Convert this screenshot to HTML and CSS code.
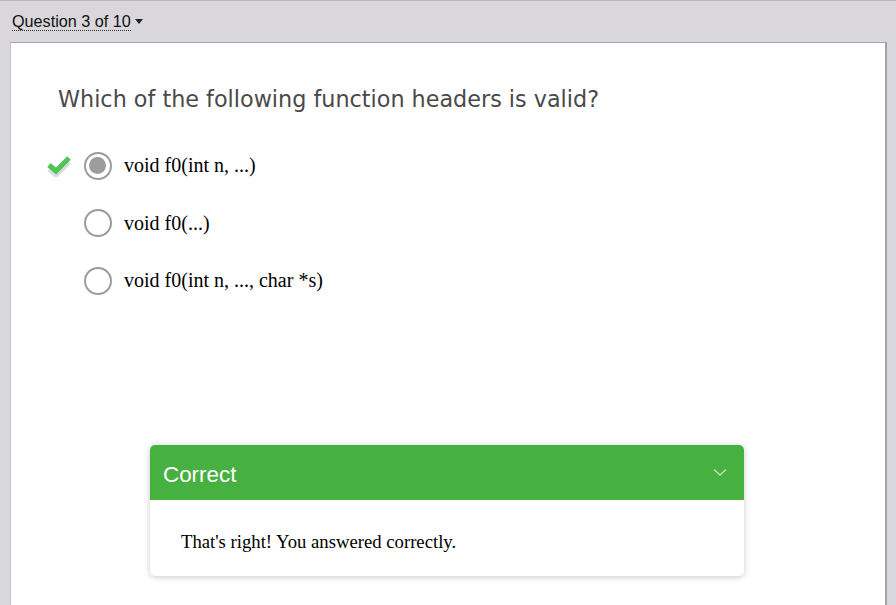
FILE: index.html
```html
<!DOCTYPE html>
<html>
<head>
<meta charset="utf-8">
<link rel="stylesheet" href="styles.css">
</head>
<body>
<div class="topbar">
  <span class="qnum">Question 3 of 10</span><span class="caret"></span>
</div>
<div class="card">
  <div class="question">Which of the following function headers is valid?</div>
  <div class="options">
    <div class="opt">
      <span class="mark">
        <svg width="26" height="22" viewBox="0 0 26 22">
          <polyline points="3,12 10,18 23,5" fill="none" stroke="#dcdcdc" stroke-width="5" stroke-linejoin="miter" transform="translate(0,2)"/>
          <polyline points="3,10 10,16 23,3" fill="none" stroke="#4cc552" stroke-width="5" stroke-linejoin="miter"/>
        </svg>
      </span>
      <span class="radio checked"></span>
      <span class="label">void f0(int n, ...)</span>
    </div>
    <div class="opt">
      <span class="mark"></span>
      <span class="radio"></span>
      <span class="label">void f0(...)</span>
    </div>
    <div class="opt">
      <span class="mark"></span>
      <span class="radio"></span>
      <span class="label">void f0(int n, ..., char *s)</span>
    </div>
  </div>
  <div class="feedback">
    <div class="fb-head">
      <span class="fb-title">Correct</span>
      <svg class="chev" width="14" height="9" viewBox="0 0 14 9"><polyline points="1,1.5 7,7 13,1.5" fill="none" stroke="#b8e6b3" stroke-width="1.4"/></svg>
    </div>
    <div class="fb-body">That's right! You answered correctly.</div>
  </div>
</div>
</body>
</html>
```
FILE: styles.css
```css
html, body {
  margin: 0;
  padding: 0;
  height: 100%;
}
body {
  background: #d9d7db;
  border-top: 1px solid #b9b9b9;
  box-sizing: border-box;
  display: flex;
  flex-direction: column;
  overflow: hidden;
}
.topbar {
  height: 41px;
  display: flex;
  align-items: center;
  padding-left: 12px;
  box-sizing: border-box;
  padding-top: 1px;
  font-family: "Liberation Sans", Arial, sans-serif;
  font-size: 16.2px;
  color: #111;
}
.qnum {
  border-bottom: 1px dotted #333;
  line-height: 17px;
}
.caret {
  display: inline-block;
  width: 0;
  height: 0;
  border-left: 4.5px solid transparent;
  border-right: 4.5px solid transparent;
  border-top: 5px solid #222;
  margin-left: 4px;
  margin-top: -2px;
}
.card {
  flex: 1;
  margin: 0 9px 0 10px;
  background: #fff;
  border-top: 1px solid #a9a9a9;
  border-left: 1px solid #c4c4c4;
  border-right: 2px solid #a3a3a3;
  padding: 43px 0 0 0;
}
.question {
  font-family: "DejaVu Sans", Verdana, sans-serif;
  font-size: 22.3px;
  line-height: 27px;
  color: #4a4a4a;
  padding-left: 47px;
}
.options {
  margin-top: 24px;
}
.opt {
  height: 57.5px;
  display: flex;
  align-items: center;
}
.mark {
  width: 26px;
  height: 22px;
  margin-left: 35px;
  margin-right: 12px;
  display: flex;
}
.radio {
  width: 28px;
  height: 28px;
  box-sizing: border-box;
  border: 2.5px solid #9c9c9c;
  border-radius: 50%;
  background: #fff;
  position: relative;
  flex: none;
}
.radio.checked::after {
  content: "";
  position: absolute;
  left: 3px;
  top: 3px;
  width: 17px;
  height: 17px;
  border-radius: 50%;
  background: #9c9c9c;
}
.label {
  margin-left: 12px;
  font-family: "Liberation Serif", "Times New Roman", serif;
  font-size: 20px;
  color: #000;
}
.feedback {
  margin: 135px 0 0 139px;
  width: 594px;
  border-radius: 5px;
  background: #fff;
  box-shadow: 0 1px 6px rgba(0,0,0,0.22);
  overflow: hidden;
}
.fb-head {
  height: 55px;
  background: #46b040;
  display: flex;
  align-items: center;
  justify-content: space-between;
  padding: 5px 17px 0 13px;
  box-sizing: border-box;
}
.fb-title {
  font-family: "Liberation Sans", Arial, sans-serif;
  font-size: 22.4px;
  color: #fff;
}
.chev {
  margin-top: -5px;
}
.fb-body {
  font-family: "Liberation Serif", "Times New Roman", serif;
  font-size: 18.7px;
  color: #000;
  padding: 31px 31px 24px;
  line-height: 21px;
}
```
